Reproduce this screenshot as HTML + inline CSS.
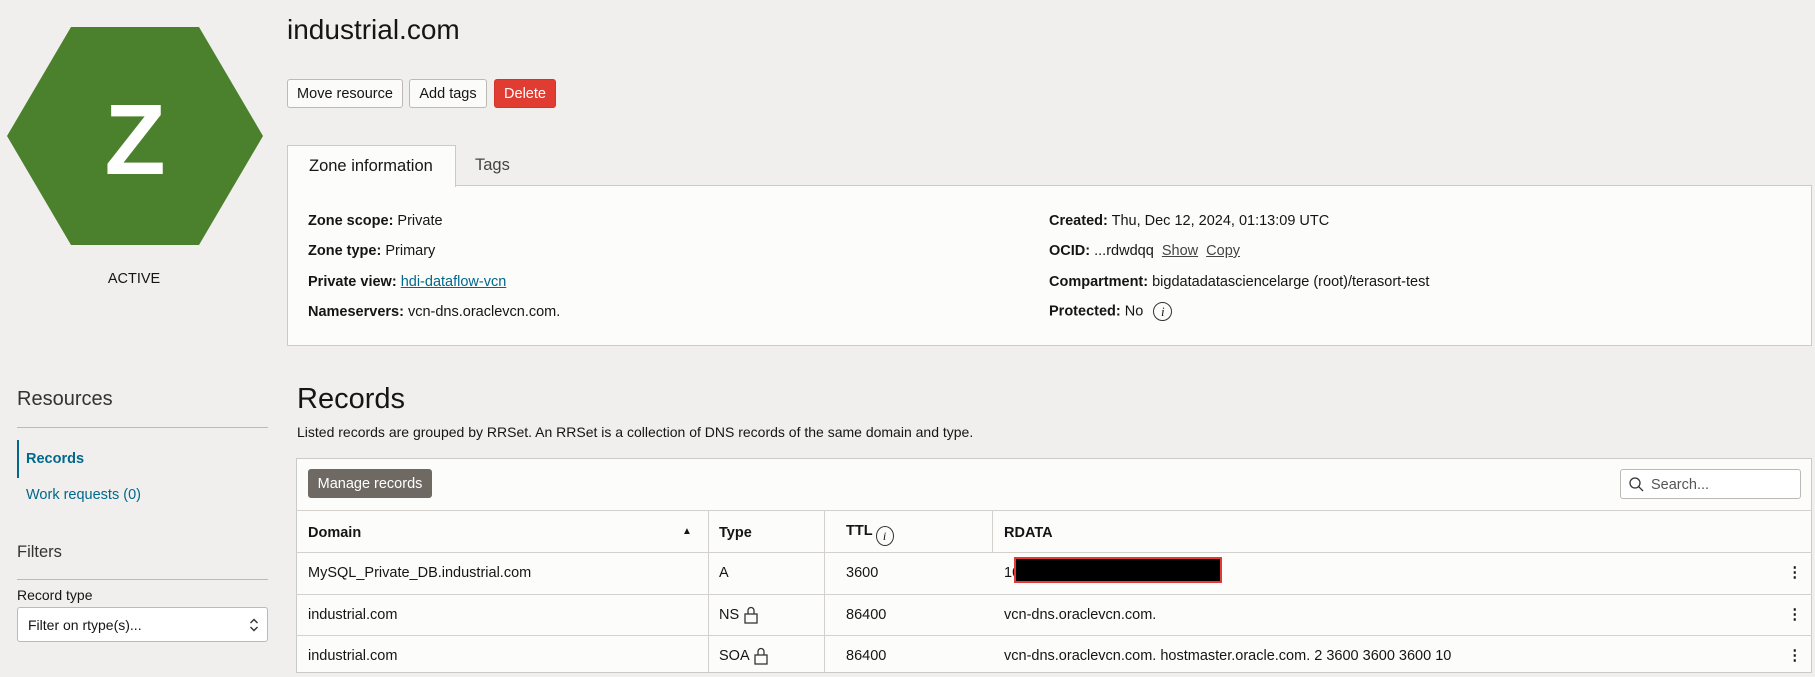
<!DOCTYPE html>
<html><head><meta charset="utf-8"><style>
*{box-sizing:border-box;margin:0;padding:0}
body{width:1815px;height:673px;overflow:hidden;background:#f0efed;font-family:"Liberation Sans",sans-serif;color:#161513;font-size:14.5px;position:relative}
.a{position:absolute}
.btn{position:absolute;height:29px;border:1px solid #bdbab6;border-radius:3px;background:#fbfbfa;font-size:14.5px;line-height:29px;text-align:center}
.lbl b{font-weight:bold}
.row{position:absolute;left:296px;width:1516px;border-top:1px solid #d4d1cd;height:42px}
.row>span{position:absolute;top:12px;white-space:nowrap}
a{color:#00688c}
.lock{position:absolute;top:-3px}
</style></head><body>
<svg class="a" style="left:7px;top:27px" width="256" height="218" viewBox="0 0 256 218"><polygon points="64,0 192,0 256,109 192,218 64,218 0,109" fill="#4b812c"/><text x="128" y="147" font-family="Liberation Sans" font-weight="bold" font-size="100" fill="#fff" text-anchor="middle">Z</text></svg>
<div class="a" style="left:95px;top:271px;width:78px;text-align:center;font-size:14.5px">ACTIVE</div>
<div class="a" style="left:287px;top:14px;font-size:28px">industrial.com</div>
<div class="btn" style="left:287px;top:79px;width:116px">Move resource</div>
<div class="btn" style="left:409px;top:79px;width:78px">Add tags</div>
<div class="btn" style="left:494px;top:79px;width:62px;background:#e03c31;border-color:#d2352b;color:#fff">Delete</div>
<div class="a" style="left:287px;top:185px;width:1525px;height:161px;background:#fcfcfb;border:1px solid #cdc9c4"></div>
<div class="a" style="left:287px;top:145px;width:169px;height:42px;background:#fcfcfb;border:1px solid #cdc9c4;border-bottom:none;font-size:16.5px;padding:11px 0 0 21px">Zone information</div>
<div class="a" style="left:475px;top:156px;font-size:16.5px;color:#444">Tags</div>
<div class="a lbl" style="left:308px;top:213px"><b>Zone scope:</b> Private</div>
<div class="a lbl" style="left:308px;top:243px"><b>Zone type:</b> Primary</div>
<div class="a lbl" style="left:308px;top:274px"><b>Private view:</b> <a href="#">hdi-dataflow-vcn</a></div>
<div class="a lbl" style="left:308px;top:304px"><b>Nameservers:</b> vcn-dns.oraclevcn.com.</div>
<div class="a lbl" style="left:1049px;top:213px"><b>Created:</b> Thu, Dec 12, 2024, 01:13:09 UTC</div>
<div class="a lbl" style="left:1049px;top:243px"><b>OCID:</b> ...rdwdqq &nbsp;<u style="color:#444">Show</u> &nbsp;<u style="color:#444">Copy</u></div>
<div class="a lbl" style="left:1049px;top:274px"><b>Compartment:</b> bigdatadatasciencelarge (root)/terasort-test</div>
<div class="a lbl" style="left:1049px;top:302px"><b>Protected:</b> No <i style="display:inline-block;width:19px;height:19px;border:1px solid #333;border-radius:50%;text-align:center;font-family:'Liberation Serif';font-size:13px;line-height:17px;margin-left:6px;vertical-align:middle">i</i></div>
<div class="a" style="left:17px;top:388px;font-size:20px;color:#333">Resources</div>
<div class="a" style="left:17px;top:427px;width:251px;border-top:1px solid #bdbab6"></div>
<div class="a" style="left:17px;top:440px;width:2px;height:38px;background:#00688c"></div>
<div class="a" style="left:26px;top:451px;font-weight:bold;color:#00688c">Records</div>
<div class="a" style="left:26px;top:487px;color:#00688c">Work requests (0)</div>
<div class="a" style="left:17px;top:543px;font-size:16.5px;color:#333">Filters</div>
<div class="a" style="left:17px;top:579px;width:251px;border-top:1px solid #bdbab6"></div>
<div class="a" style="left:17px;top:587px;font-size:14px">Record type</div>
<div class="a" style="left:17px;top:607px;width:251px;height:35px;background:#fff;border:1px solid #bdbab6;border-radius:3px;padding:9px 0 0 10px;font-size:14px">Filter on rtype(s)...
<svg class="a" style="right:8px;top:9px" width="10" height="16" viewBox="0 0 10 16"><path d="M1.5 6 L5 2.5 L8.5 6 M1.5 10 L5 13.5 L8.5 10" fill="none" stroke="#333" stroke-width="1.4"/></svg></div>
<div class="a" style="left:297px;top:383px;font-size:29px">Records</div>
<div class="a" style="left:297px;top:424px;font-size:14px">Listed records are grouped by RRSet. An RRSet is a collection of DNS records of the same domain and type.</div>
<div class="a" style="left:296px;top:458px;width:1516px;height:215px;background:#fcfcfb;border:1px solid #cdc9c4"></div>
<div class="btn" style="left:308px;top:469px;width:124px;background:#6f6964;border-color:#6f6964;color:#fff">Manage records</div>
<div class="a" style="left:1620px;top:469px;width:181px;height:30px;background:#fff;border:1px solid #bdbab6;border-radius:3px;padding:7px 0 0 30px;color:#555">Search...
<svg class="a" style="left:8px;top:7px" width="15" height="15" viewBox="0 0 15 15"><circle cx="6" cy="6" r="5" fill="none" stroke="#333" stroke-width="1.3"/><line x1="9.7" y1="9.7" x2="14" y2="14" stroke="#333" stroke-width="1.3"/></svg></div>
<div class="row" style="top:510px;font-weight:bold"><span style="left:12px;top:14px">Domain</span><span style="left:386px;top:15px;font-size:10px">▲</span><span style="left:423px;top:14px">Type</span><span style="left:550px;top:12px">TTL<i style="display:inline-block;width:18px;height:20px;border:1px solid #333;border-radius:50%;text-align:center;font-weight:normal;font-family:'Liberation Serif';font-size:12px;line-height:18px;vertical-align:-5px;margin-left:3px">i</i></span><span style="left:708px;top:14px">RDATA</span></div>
<div class="a" style="left:708px;top:510px;height:163px;border-left:1px solid #d4d1cd"></div>
<div class="a" style="left:824px;top:510px;height:163px;border-left:1px solid #d4d1cd"></div>
<div class="a" style="left:992px;top:510px;height:42px;border-left:1px solid #d4d1cd"></div>
<div class="row" style="top:552px"><span style="left:12px">MySQL_Private_DB.industrial.com</span><span style="left:423px">A</span><span style="left:550px">3600</span><span style="left:708px">10</span><span style="right:10px;font-weight:bold">⋮</span></div>
<div class="row" style="top:594px"><span style="left:12px">industrial.com</span><span style="left:423px">NS</span><svg class="lock" style="left:448px;top:11px" width="14" height="18" viewBox="0 0 14 18"><path d="M4 8 V4.5 A3 3 0 0 1 10 4.5 V8" fill="none" stroke="#333" stroke-width="1.3"/><rect x="1" y="8" width="12" height="9" fill="none" stroke="#333" stroke-width="1.3"/></svg><span style="left:550px">86400</span><span style="left:708px">vcn-dns.oraclevcn.com.</span><span style="right:10px;font-weight:bold">⋮</span></div>
<div class="row" style="top:635px"><span style="left:12px">industrial.com</span><span style="left:423px">SOA</span><svg class="lock" style="left:458px;top:11px" width="14" height="18" viewBox="0 0 14 18"><path d="M4 8 V4.5 A3 3 0 0 1 10 4.5 V8" fill="none" stroke="#333" stroke-width="1.3"/><rect x="1" y="8" width="12" height="9" fill="none" stroke="#333" stroke-width="1.3"/></svg><span style="left:550px">86400</span><span style="left:708px">vcn-dns.oraclevcn.com. hostmaster.oracle.com. 2 3600 3600 3600 10</span><span style="right:10px;font-weight:bold">⋮</span></div>
<div class="a" style="left:1014px;top:557px;width:208px;height:26px;background:#000;border:2px solid #e53935"></div>
</body></html>
